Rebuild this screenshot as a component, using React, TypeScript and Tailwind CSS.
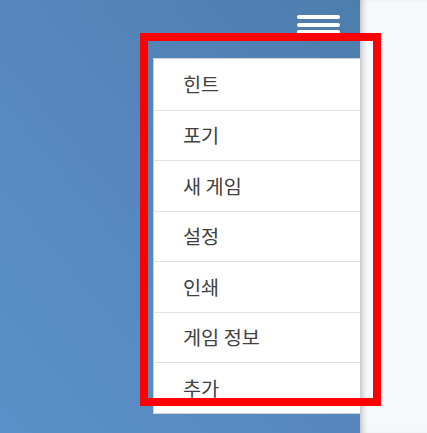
const items = ["힌트", "포기", "새 게임", "설정", "인쇄", "게임 정보", "추가"];

export default function App() {
  return (
    <div className="relative flex h-[433px] w-[427px] overflow-hidden font-['Noto_Sans_CJK_KR','Noto_Sans',sans-serif]">
      <div className="flex w-[360px] shrink-0 flex-col bg-gradient-to-tr from-[#5b91c8] via-[#5587bd] to-[#4d7dac]">
        <div className="flex h-[58px] justify-end pr-[20px] pt-[15px]">
          <div className="flex w-[43px] flex-col gap-[3.5px]">
            <span className="h-[4px] rounded-full bg-white" />
            <span className="h-[4px] rounded-full bg-white" />
            <span className="h-[4px] rounded-full bg-white" />
          </div>
        </div>
        <ul className="ml-auto w-[207px] border border-r-0 border-[#cfd3d8] bg-white">
          {items.map((label, i) => (
            <li
              key={label}
              className={`flex h-[50.5px] items-center pl-[29px] text-[19.7px] text-[#404040] ${
                i > 0 ? "border-t border-[#e2e2e2]" : ""
              }`}
            >
              {label}
            </li>
          ))}
        </ul>
      </div>
      <div className="flex-1 bg-[#f7f8fb] shadow-[inset_6px_0_6px_-4px_rgba(0,0,0,0.25)]" />
      <div className="pointer-events-none absolute left-[140px] top-[33px] h-[373px] w-[241px] border-[8px] border-[#ff0000]" />
    </div>
  );
}
